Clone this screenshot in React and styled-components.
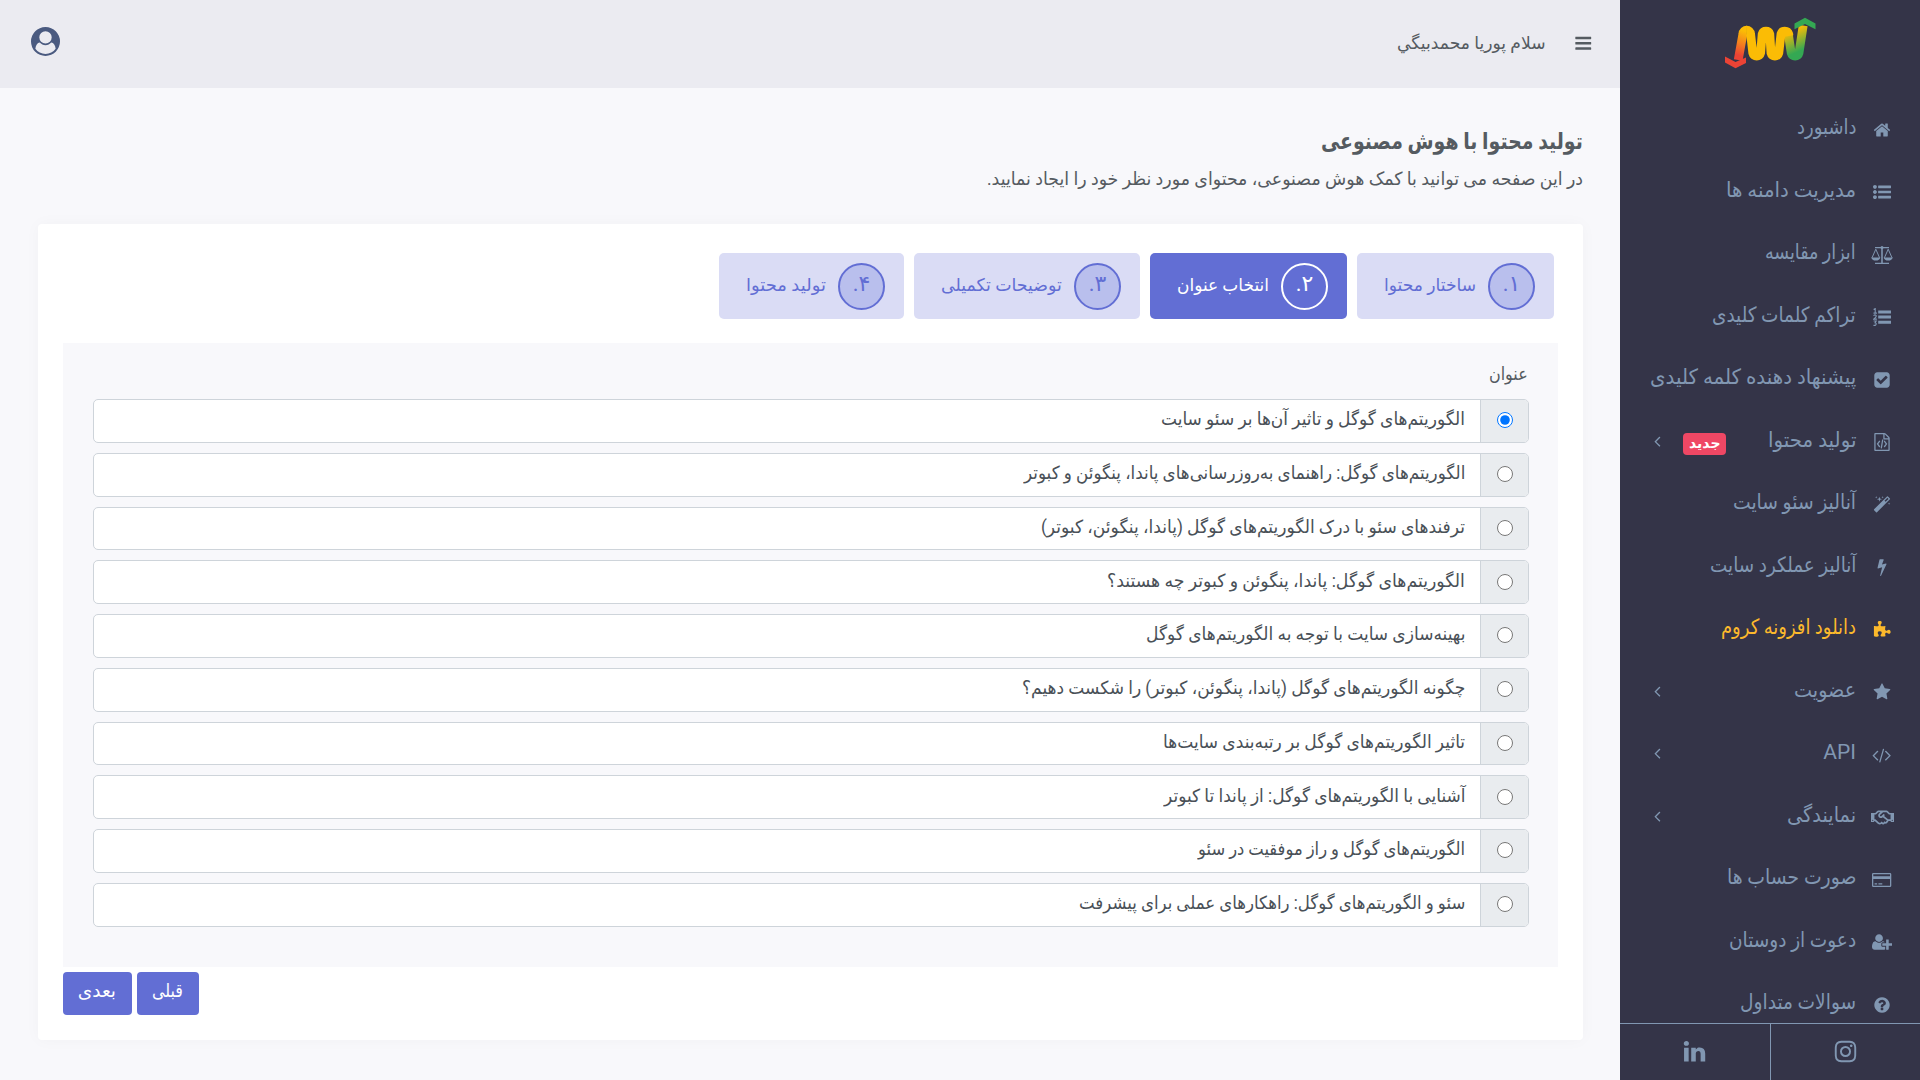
import React, { useLayoutEffect, useRef, useState } from "react";
import styled, { createGlobalStyle } from "styled-components";
import { FaRegHandshake } from "react-icons/fa";

const GlobalStyle = createGlobalStyle`
  * {
    box-sizing: border-box;
  }
  body {
    margin: 0;
    background: #f8f8fb;
    color: #555b61;
    font-family: Roboto, "DejaVu Sans", sans-serif;
    overflow: hidden;
  }
`;

const Page = styled.div`
  display: flex;
  direction: rtl;
  width: 1920px;
  height: 1080px;
`;

const Sidebar = styled.aside`
  display: flex;
  flex-direction: column;
  width: 300px;
  flex-shrink: 0;
  height: 1080px;
  background: #343448;
  color: #8197b2;
`;

const Brand = styled.div`
  height: 96px;
  flex-shrink: 0;
`;

const Menu = styled.ul`
  flex: 1;
  min-height: 0;
  margin: 0;
  padding: 0;
  list-style: none;
  overflow: hidden;
`;

const MenuItem = styled.li`
  display: flex;
  align-items: center;
  height: 62.5px;
  padding: 0 26px 0 28px;
  font-size: 21px;
  color: ${(props) => (props.$highlight ? "#fcb92c" : "inherit")};
`;

const MenuIcon = styled.span`
  display: flex;
  justify-content: center;
  width: 24px;
  flex-shrink: 0;
  margin-left: 14px;
  padding-top: 5px;

  svg {
    flex-shrink: 0;
  }
`;

const Badge = styled.span`
  display: flex;
  align-items: center;
  justify-content: center;
  width: 43px;
  height: 22px;
  margin-right: 41px;
  margin-top: 8px;
  padding-bottom: 2px;
  border-radius: 4px;
  background: #ef4764;
  color: #fff;
  font-size: 14px;
  font-weight: 700;
`;

const Arrow = styled.span`
  display: flex;
  margin-right: auto;
  margin-left: 6px;
  padding-top: 2px;
`;

const Social = styled.div`
  display: flex;
  height: 57px;
  flex-shrink: 0;
  border-top: 1px solid #8197b2;
`;

const SocialLink = styled.a`
  display: flex;
  flex: 1;
  align-items: center;
  justify-content: center;
  padding-bottom: 2px;
  color: #8197b2;

  & + & {
    border-right: 1px solid #8197b2;
  }
`;

const Main = styled.main`
  flex: 1;
  display: flex;
  flex-direction: column;
`;

const Topbar = styled.header`
  display: flex;
  align-items: center;
  height: 88px;
  padding: 0 28px 6px 31px;
  background: #ebebf1;
  font-size: 17.5px;
`;

const MenuToggle = styled.span`
  display: flex;
  padding-top: 4px;
`;

const Greeting = styled.div`
  margin: 4px 28px 0 auto;
`;

const Content = styled.div`
  padding: 36px 37px 0 38px;
`;

const PageTitle = styled.h1`
  margin: 0;
  height: 36px;
  line-height: 36px;
  font-size: 23px;
  font-weight: 700;
`;

const PageHint = styled.p`
  margin: 0;
  height: 64px;
  line-height: 38px;
  font-size: 18px;
`;

const Card = styled.section`
  height: 816px;
  padding: 29px 25px 0;
  border-radius: 4px;
  background: #fff;
  box-shadow: 0 0 16px rgba(18, 38, 63, 0.03);
`;

const Steps = styled.div`
  display: flex;
  gap: 10px;
  padding-right: 4px;
`;

const Step = styled.div`
  display: flex;
  align-items: center;
  height: 66px;
  padding: 0 19px 0 27px;
  border-radius: 5px;
  background: ${(props) => (props.$active ? "#626ed4" : "#dadcf5")};
  color: ${(props) => (props.$active ? "#fff" : "#626ed4")};
  font-size: 17.5px;
`;

const StepNumber = styled.span`
  display: flex;
  align-items: center;
  justify-content: center;
  width: 47px;
  height: 47px;
  margin-left: 12px;
  padding-bottom: 5px;
  border: 2px solid ${(props) => (props.$active ? "#fff" : "#626ed4")};
  border-radius: 50%;
  background: ${(props) => (props.$active ? "transparent" : "#b9bfed")};
  font-size: 22px;
`;

const StepLabel = styled.span`
  padding-bottom: 3px;
`;

const Panel = styled.div`
  height: 624px;
  margin-top: 24px;
  padding: 16px 29px 0 30px;
  background: #f8f8fb;
`;

const Label = styled.div`
  height: 40px;
  line-height: 30px;
  padding-right: 1px;
  font-size: 18px;
`;

const Options = styled.div`
  display: flex;
  flex-direction: column;
  gap: 10px;
`;

const Option = styled.label`
  display: flex;
  height: 43.75px;
  border: 1px solid #ced4da;
  border-radius: 5px;
  background: #fff;
  color: #495057;
  font-size: 18px;
  overflow: hidden;
`;

const OptionRadio = styled.span`
  display: flex;
  align-items: center;
  justify-content: center;
  width: 48px;
  padding-bottom: 1px;
  border-left: 1px solid #ced4da;
  background: #e9ecef;

  input {
    width: 16px;
    height: 16px;
    margin: 0;
  }
`;

const OptionText = styled.span`
  display: flex;
  align-items: center;
  flex: 1;
  padding: 0 15px 4px;
`;

const Actions = styled.div`
  display: flex;
  justify-content: flex-end;
  gap: 5px;
  margin-top: 5px;
`;

const Button = styled.button`
  display: flex;
  align-items: center;
  justify-content: center;
  height: 43px;
  padding: 0 16px 6px 15px;
  border: 0;
  border-radius: 4px;
  background: #626ed4;
  color: #fff;
  font: inherit;
  font-size: 18.5px;
`;

const PhraseBox = styled.span`
  display: inline-block;
  flex-shrink: 0;
  white-space: nowrap;
`;

const PhraseText = styled.span`
  display: inline-block;
  transform-origin: right center;
`;

// Condenses a run of text to the given column width.
const Phrase = ({ width, children }) => {
  const ref = useRef(null);
  const [scale, setScale] = useState(1);

  useLayoutEffect(() => {
    setScale(width / ref.current.offsetWidth);
  }, [width, children]);

  return (
    <PhraseBox style={{ width }}>
      <PhraseText ref={ref} style={{ transform: `scaleX(${scale})` }}>
        {children}
      </PhraseText>
    </PhraseBox>
  );
};

const Glyph = ({ d, w = 1792, size = 18, x = 0 }) => (
  <svg
    width={(size * w) / 1792}
    height={size}
    viewBox={`${x} 0 ${w} 1792`}
    fill="currentColor"
  >
    <path d={d} />
  </svg>
);

const paths = {
  home: "M1472 992v480q0 26-19 45t-45 19h-384v-384h-256v384h-384q-26 0-45-19t-19-45v-480q0-1 .5-3t.5-3l575-474 575 474q1 2 1 6zm223-69l-62 74q-8 9-21 11h-3q-13 0-21-7l-692-577-692 577q-12 8-24 7-13-2-21-11l-62-74q-8-10-7-23.5t11-21.5l719-599q32-26 76-26t76 26l244 204v-195q0-14 9-23t23-9h192q14 0 23 9t9 23v408l219 182q10 8 11 21.5t-7 23.5z",
  list: "M384 1408q0 80-56 136t-136 56-136-56-56-136 56-136 136-56 136 56 56 136zm0-512q0 80-56 136t-136 56-136-56-56-136 56-136 136-56 136 56 56 136zm1408 416v192q0 13-9.5 22.5t-22.5 9.5h-1216q-13 0-22.5-9.5t-9.5-22.5v-192q0-13 9.5-22.5t22.5-9.5h1216q13 0 22.5 9.5t9.5 22.5zm-1408-928q0 80-56 136t-136 56-136-56-56-136 56-136 136-56 136 56 56 136zm1408 416v192q0 13-9.5 22.5t-22.5 9.5h-1216q-13 0-22.5-9.5t-9.5-22.5v-192q0-13 9.5-22.5t22.5-9.5h1216q13 0 22.5 9.5t9.5 22.5zm0-512v192q0 13-9.5 22.5t-22.5 9.5h-1216q-13 0-22.5-9.5t-9.5-22.5v-192q0-13 9.5-22.5t22.5-9.5h1216q13 0 22.5 9.5t9.5 22.5z",
  check: "M813 1299l614-614q19-19 19-45t-19-45l-102-102q-19-19-45-19t-45 19l-467 467-211-211q-19-19-45-19t-45 19l-102 102q-19 19-19 45t19 45l358 358q19 19 45 19t45-19zm851-883v960q0 119-84.5 203.5t-203.5 84.5h-960q-119 0-203.5-84.5t-84.5-203.5v-960q0-119 84.5-203.5t203.5-84.5h960q119 0 203.5 84.5t84.5 203.5z",
  file: "M1596 380q28 28 48 76t20 88v1152q0 40-28 68t-68 28h-1344q-40 0-68-28t-28-68v-1600q0-40 28-68t68-28h896q40 0 88 20t76 48zm-444-244v376h376q-10-29-22-41l-313-313q-12-12-41-22zm384 1528v-1024h-416q-40 0-68-28t-28-68v-416h-768v1536h1280zm-928-896q8-11 21-12.5t24 6.5l51 38q11 8 12.5 21t-6.5 24l-182 243 182 243q8 11 6.5 24t-12.5 21l-51 38q-11 8-24 6.5t-21-12.5l-226-301q-14-19 0-38zm802 301q14 19 0 38l-226 301q-8 11-21 12.5t-24-6.5l-51-38q-11-8-12.5-21t6.5-24l182-243-182-243q-8-11-6.5-24t12.5-21l51-38q11-8 24-6.5t21 12.5zm-620 461q-13-2-20.5-13t-5.5-24l138-831q2-13 13-20.5t24-5.5l63 10q13 2 20.5 13t5.5 24l-138 831q-2 13-13 20.5t-24 5.5z",
  magic: "M1254 581l293-293-107-107-293 293zm447-293q0 27-18 45l-1286 1286q-18 18-45 18t-45-18l-198-198q-18-18-18-45t18-45l1286-1286q18-18 45-18t45 18l198 198q18 18 18 45zm-1351-190l98 30-98 30-30 98-30-98-98-30 98-30 30-98zm350 162l196 60-196 60-60 196-60-196-196-60 196-60 60-196zm930 478l98 30-98 30-30 98-30-98-98-30 98-30 30-98zm-640-640l98 30-98 30-30 98-30-98-98-30 98-30 30-98z",
  bolt: "M1333 566q18 20 7 44l-540 1157q-13 25-42 25-4 0-14-2-17-5-25.5-19t-4.5-30l197-808-406 101q-4 1-12 1-18 0-31-11-18-15-13-39l201-825q4-14 16-23t28-9h328q19 0 32 12.5t13 29.5q0 8-5 18l-171 463 396-98q8-2 12-2 19 0 34 15z",
  puzzle: "M1755 1083q0 81-44.5 135t-123.5 54q-41 0-77.5-17.5t-59-38-56.5-38-71-17.5q-110 0-110 124 0 39 16 115t15 115v5q-22 0-33 1-34 3-97.5 11.5t-115.5 13.5-98 5q-61 0-103-26.5t-42-83.5q0-37 17.5-71t38-56.5 38-59 17.5-77.5q0-79-54-123.5t-135-44.5q-84 0-143 45.5t-59 127.5q0 43 15 83t33.5 64.5 33.5 53 15 50.5q0 45-46 89-37 35-117 35-95 0-245-24-9-2-27.5-4t-27.5-4l-13-2q-1 0-3-1-2 0-2-1v-1024q2 1 17.5 3.5t34 5 21.5 3.5q150 24 245 24 80 0 117-35 46-44 46-89 0-22-15-50.5t-33.5-53-33.5-64.5-15-83q0-82 59-127.5t144-45.5q80 0 134 44.5t54 123.5q0 41-17.5 77.5t-38 59-38 56.5-17.5 71q0 57 42 83.5t103 26.5q64 0 180-15t163-17v2q-1 2-3.5 17.5t-5 34-3.5 21.5q-24 150-24 245 0 80 35 117 44 46 89 46 22 0 50.5-15t53-33.5 64.5-33.5 83-15q82 0 127.5 59t45.5 143z",
  star: "M1728 647q0 22-26 48l-363 354 86 500q1 7 1 20 0 21-10.5 35.5t-30.5 14.5q-19 0-40-12l-449-236-449 236q-22 12-40 12-21 0-31.5-14.5t-10.5-35.5q0-6 2-20l86-500-364-354q-25-27-25-48 0-37 56-46l502-73 225-455q19-41 49-41t49 41l225 455 502 73q56 9 56 46z",
  code: "M617 1399l-50 50q-10 10-23 10t-23-10l-466-466q-10-10-10-23t10-23l466-466q10-10 23-10t23 10l50 50q10 10 10 23t-10 23l-393 393 393 393q10 10 10 23t-10 23zm591-1067l-373 1291q-4 13-15.5 19.5t-23.5 2.5l-62-17q-13-4-19.5-15.5t-2.5-24.5l373-1291q4-13 15.5-19.5t23.5-2.5l62 17q13 4 19.5 15.5t2.5 24.5zm657 651l-466 466q-10 10-23 10t-23-10l-50-50q-10-10-10-23t10-23l393-393-393-393q-10-10-10-23t10-23l50-50q10-10 23-10t23 10l466 466q10 10 10 23t-10 23z",
  card: "M128 192h1664q128 0 128 128v1152q0 128-128 128h-1664q-128 0-128-128v-1152q0-128 128-128zm0 128v192h1664v-192zm0 480v672h1664v-672zm128 416h256v128h-256zm384 0h384v128h-384z",
  invite: "M704 896q-159 0-271.5-112.5t-112.5-271.5 112.5-271.5 271.5-112.5 271.5 112.5 112.5 271.5-112.5 271.5-271.5 112.5zm960 128h352q13 0 22.5 9.5t9.5 22.5v192q0 13-9.5 22.5t-22.5 9.5h-352v352q0 13-9.5 22.5t-22.5 9.5h-192q-13 0-22.5-9.5t-9.5-22.5v-352h-352q-13 0-22.5-9.5t-9.5-22.5v-192q0-13 9.5-22.5t22.5-9.5h352v-352q0-13 9.5-22.5t22.5-9.5h192q13 0 22.5 9.5t9.5 22.5v352zm-736 224q0 52 38 90t90 38h256v238q-68 50-171 50h-874q-121 0-194-69t-73-190q0-53 3.5-103.5t14-109 26.5-108.5 43-97.5 62-81 85.5-53.5 111.5-20q19 0 39 17 79 61 154.5 91.5t164.5 30.5 164.5-30.5 154.5-91.5q20-17 39-17 132 0 217 96h-223q-52 0-90 38t-38 90v192z",
  question: "M1024 1376v-192q0-14-9-23t-23-9h-192q-14 0-23 9t-9 23v192q0 14 9 23t23 9h192q14 0 23-9t9-23zm256-672q0-88-55.5-163t-138.5-116-170-41q-243 0-371 213-15 24 8 42l132 100q7 6 19 6 16 0 25-12 53-68 86-92 34-24 86-24 48 0 85.5 26t37.5 59q0 38-20 61t-68 45q-63 28-115.5 86.5t-52.5 125.5v36q0 14 9 23t23 9h192q14 0 23-9t9-23q0-19 21.5-49.5t54.5-49.5q32-18 49-28.5t46-35 44.5-48 28-60.5 12.5-81zm384 192q0 209-103 385.5t-279.5 279.5-385.5 103-385.5-103-279.5-279.5-103-385.5 103-385.5 279.5-279.5 385.5-103 385.5 103 279.5 279.5 103 385.5z",
  instagram: "M1152 896q0-106-75-181t-181-75-181 75-75 181 75 181 181 75 181-75 75-181zm138 0q0 164-115 279t-279 115-279-115-115-279 115-279 279-115 279 115 115 279zm108-410q0 38-27 65t-65 27-65-27-27-65 27-65 65-27 65 27 27 65zm-502-220q-7 0-76.5-.5t-105.5 0-96.5 3-103 10-71.5 18.5q-50 20-88 58t-58 88q-11 29-18.5 71.5t-10 103-3 96.5 0 105.5.5 76.5-.5 76.5 0 105.5 3 96.5 10 103 18.5 71.5q20 50 58 88t88 58q29 11 71.5 18.5t103 10 96.5 3 105.5 0 76.5-.5 76.5.5 105.5 0 96.5-3 103-10 71.5-18.5q50-20 88-58t58-88q11-29 18.5-71.5t10-103 3-96.5 0-105.5-.5-76.5.5-76.5 0-105.5-3-96.5-10-103-18.5-71.5q-20-50-58-88t-88-58q-29-11-71.5-18.5t-103-10-96.5-3-105.5 0-76.5.5zm768 630q0 229-5 317-10 208-124 322t-322 124q-88 5-317 5t-317-5q-208-10-322-124t-124-322q-5-88-5-317t5-317q10-208 124-322t322-124q88-5 317-5t317 5q208 10 322 124t124 322q5 88 5 317z",
  linkedin: "M477 625v991h-330v-991h330zm21-306q1 73-50.5 122t-135.5 49h-2q-82 0-132-49t-50-122q0-74 51.5-122.5t134.5-48.5 133 48.5 51 122.5zm1166 729v568h-329v-530q0-105-40.5-164.5t-126.5-59.5q-63 0-105.5 34.5t-63.5 85.5q-11 30-11 81v553h-329q2-399 2-647t-1-296l-1-48h329v144h-2q20-32 41-56t56.5-52 87-43.5 114.5-15.5q171 0 275 113.5t104 332.5z",
  angle: "M1203 544q0 13-10 23l-393 393 393 393q10 10 10 23t-10 23l-50 50q-10 10-23 10t-23-10l-466-466q-10-10-10-23t10-23l466-466q10-10 23-10t23 10l50 50q10 10 10 23z",
  bars: "M1664 1344v128q0 26-19 45t-45 19h-1408q-26 0-45-19t-19-45v-128q0-26 19-45t45-19h1408q26 0 45 19t19 45zm0-512v128q0 26-19 45t-45 19h-1408q-26 0-45-19t-19-45v-128q0-26 19-45t45-19h1408q26 0 45 19t19 45zm0-512v128q0 26-19 45t-45 19h-1408q-26 0-45-19t-19-45v-128q0-26 19-45t45-19h1408q26 0 45 19t19 45z",
  user: "M1523 1339q-22-155-87.5-257.5t-184.5-118.5q-67 74-159.5 115.5t-195.5 41.5-195.5-41.5-159.5-115.5q-119 16-184.5 118.5t-87.5 257.5q106 150 271 237.5t356 87.5 356-87.5 271-237.5zm-243-699q0-159-112.5-271.5t-271.5-112.5-271.5 112.5-112.5 271.5 112.5 271.5 271.5 112.5 271.5-112.5 112.5-271.5zm512 256q0 182-71 347.5t-190.5 286-285.5 191.5-349 71q-182 0-348-71t-286-191-191-286-71-348 71-348 191-286 286-191 348-71 348 71 286 191 191 286 71 348z",
};

const CardIcon = () => (
  <svg width="19.3" height="18" viewBox="0 0 1920 1792" fill="currentColor">
    <path fillRule="evenodd" d={paths.card} />
  </svg>
);

const ScaleIcon = () => (
  <svg width="22" height="18" viewBox="0 0 22 18" fill="none" stroke="currentColor">
    <path d="M4 1.7H18M4 17.3H18" strokeWidth="1.3" />
    <path d="M11 1V17" strokeWidth="1.6" />
    <path d="M1 11.8L4.8 3.2L8.6 11.8M13.4 11.8L17.2 3.2L21 11.8" strokeWidth="1" />
    <path
      d="M.2 11.5H9.4Q8.6 14.6 4.8 14.6T.2 11.5ZM12.6 11.5H21.8Q21 14.6 17.2 14.6T12.6 11.5Z"
      fill="currentColor"
      stroke="none"
    />
    <circle cx="11" cy="1.6" r="1.5" fill="currentColor" stroke="none" />
  </svg>
);

const NumberedIcon = () => (
  <svg width="18" height="18" viewBox="0 0 18 18" fill="currentColor">
    <path d="M5.2 2.5H18V5.5H5.2ZM5.2 7.6H18V10.6H5.2ZM5.2 12.7H18V15.7H5.2Z" />
    <path
      d="M.6 1.5L2.2.6V4.9M.5 5.1H3.9M.5 7.6Q2 6.3 3 7.4T.7 11.1H3.9M.6 13H3.2L2 14.7Q3.5 14.9 3.1 16.4T.4 17.2"
      fill="none"
      stroke="currentColor"
      strokeWidth="1.1"
    />
  </svg>
);

const Logo = () => (
  <svg width="300" height="96" viewBox="0 0 300 96">
    <defs>
      <linearGradient id="warm" gradientUnits="userSpaceOnUse" x1="118" y1="58" x2="127" y2="32">
        <stop offset="0.1" stopColor="#ea4335" />
        <stop offset="0.5" stopColor="#f47b20" />
        <stop offset="1" stopColor="#fbbc05" />
      </linearGradient>
      <linearGradient id="fresh" gradientUnits="userSpaceOnUse" x1="166" y1="33" x2="175" y2="53">
        <stop offset="0" stopColor="#fbbc05" />
        <stop offset="1" stopColor="#34a853" />
      </linearGradient>
    </defs>
    <g fill="none" strokeWidth="8.8">
      <path d="M168.3 34L171.2 53A4 4 0 0 0 179 53L183.2 25.5" stroke="url(#fresh)" />
      <path d="M118.2 60L122.9 34A4 4 0 0 1 126.9 30.2" stroke="url(#warm)" />
      <path
        d="M126.4 30.2A4 4 0 0 1 130.6 34L132.8 53A4 4 0 0 0 140.6 53L142.2 34A4 4 0 0 1 149.8 34L151 53A4 4 0 0 0 158.8 53L161 34A4 4 0 0 1 168.7 34L169 36"
        stroke="#fbbc05"
      />
    </g>
    <path d="M174.5 23.5L185 17.8L195.5 23.500V29.3L185 24L174.5 29.3Z" fill="#34a853" />
    <path d="M105 56.5L115.5 62L126 57.500V63L115.5 68.3L105 62.5Z" fill="#ea4335" />
  </svg>
);

const menu = [
  { text: "داشبورد", width: 59, icon: <Glyph d={paths.home} /> },
  { text: "مدیریت دامنه ها", width: 130, icon: <Glyph d={paths.list} /> },
  { text: "ابزار مقایسه", width: 91, icon: <ScaleIcon /> },
  { text: "تراکم کلمات کلیدی", width: 144, icon: <NumberedIcon /> },
  { text: "پیشنهاد دهنده کلمه کلیدی", width: 206, icon: <Glyph d={paths.check} /> },
  { text: "تولید محتوا", width: 89, icon: <Glyph d={paths.file} />, badge: "جدید", open: true },
  { text: "آنالیز سئو سایت", width: 123, icon: <Glyph d={paths.magic} /> },
  { text: "آنالیز عملکرد سایت", width: 146, icon: <Glyph d={paths.bolt} /> },
  { text: "دانلود افزونه کروم", width: 135, icon: <Glyph d={paths.puzzle} />, highlight: true },
  { text: "عضویت", width: 62, icon: <Glyph d={paths.star} />, open: true },
  { text: "API", width: 33, icon: <Glyph d={paths.code} w={1920} />, open: true },
  { text: "نمایندگی", width: 69, icon: <FaRegHandshake size={23} />, open: true },
  { text: "صورت حساب ها", width: 129, icon: <CardIcon /> },
  { text: "دعوت از دوستان", width: 127, icon: <Glyph d={paths.invite} w={2048} /> },
  { text: "سوالات متداول", width: 116, icon: <Glyph d={paths.question} /> },
];

const steps = [
  { number: "۱.", text: "ساختار محتوا", width: 92 },
  { number: "۲.", text: "انتخاب عنوان", width: 92, active: true },
  { number: "۳.", text: "توضیحات تکمیلی", width: 121 },
  { number: "۴.", text: "تولید محتوا", width: 80 },
];

const titles = [
  { text: "الگوریتم‌های گوگل و تاثیر آن‌ها بر سئو سایت", width: 304 },
  { text: "الگوریتم‌های گوگل: راهنمای به‌روزرسانی‌های پاندا، پنگوئن و کبوتر", width: 441 },
  { text: "ترفندهای سئو با درک الگوریتم‌های گوگل (پاندا، پنگوئن، کبوتر)", width: 424 },
  { text: "الگوریتم‌های گوگل: پاندا، پنگوئن و کبوتر چه هستند؟", width: 358 },
  { text: "بهینه‌سازی سایت با توجه به الگوریتم‌های گوگل", width: 319 },
  { text: "چگونه الگوریتم‌های گوگل (پاندا، پنگوئن، کبوتر) را شکست دهیم؟", width: 443 },
  { text: "تاثیر الگوریتم‌های گوگل بر رتبه‌بندی سایت‌ها", width: 302 },
  { text: "آشنایی با الگوریتم‌های گوگل: از پاندا تا کبوتر", width: 301 },
  { text: "الگوریتم‌های گوگل و راز موفقیت در سئو", width: 267 },
  { text: "سئو و الگوریتم‌های گوگل: راهکارهای عملی برای پیشرفت", width: 386 },
];

const App = () => {
  const [selected, setSelected] = useState(0);

  return (
    <>
      <GlobalStyle />
      <Page>
        <Sidebar>
          <Brand>
            <Logo />
          </Brand>
          <Menu>
            {menu.map((item) => (
              <MenuItem key={item.text} $highlight={item.highlight}>
                <MenuIcon>{item.icon}</MenuIcon>
                <Phrase width={item.width}>{item.text}</Phrase>
                {item.badge && (
                  <Badge>
                    <Phrase width={32}>{item.badge}</Phrase>
                  </Badge>
                )}
                {item.open && (
                  <Arrow>
                    <Glyph d={paths.angle} x={576} w={680} />
                  </Arrow>
                )}
              </MenuItem>
            ))}
          </Menu>
          <Social>
            <SocialLink>
              <Glyph d={paths.instagram} size={25} />
            </SocialLink>
            <SocialLink>
              <Glyph d={paths.linkedin} size={25} />
            </SocialLink>
          </Social>
        </Sidebar>
        <Main>
          <Topbar>
            <MenuToggle>
              <Glyph d={paths.bars} size={18.5} />
            </MenuToggle>
            <Greeting>
              <Phrase width={149}>سلام پوریا محمدبیگي</Phrase>
            </Greeting>
            <svg width="29" height="29" viewBox="0 0 1792 1792" fill="#4a5a80">
              <path d={paths.user} />
            </svg>
          </Topbar>
          <Content>
            <PageTitle>
              <Phrase width={262}>تولید محتوا با هوش مصنوعی</Phrase>
            </PageTitle>
            <PageHint>
              <Phrase width={596}>
                در این صفحه می توانید با کمک هوش مصنوعی، محتوای مورد نظر خود را ایجاد نمایید.
              </Phrase>
            </PageHint>
            <Card>
              <Steps>
                {steps.map((step) => (
                  <Step key={step.number} $active={step.active}>
                    <StepNumber $active={step.active}>{step.number}</StepNumber>
                    <StepLabel>
                      <Phrase width={step.width}>{step.text}</Phrase>
                    </StepLabel>
                  </Step>
                ))}
              </Steps>
              <Panel>
                <Label>
                  <Phrase width={39}>عنوان</Phrase>
                </Label>
                <Options>
                  {titles.map((title, index) => (
                    <Option key={title.text}>
                      <OptionRadio>
                        <input
                          type="radio"
                          name="title"
                          checked={selected === index}
                          onChange={() => setSelected(index)}
                        />
                      </OptionRadio>
                      <OptionText>
                        <Phrase width={title.width}>{title.text}</Phrase>
                      </OptionText>
                    </Option>
                  ))}
                </Options>
              </Panel>
              <Actions>
                <Button>
                  <Phrase width={31}>قبلی</Phrase>
                </Button>
                <Button>
                  <Phrase width={38}>بعدی</Phrase>
                </Button>
              </Actions>
            </Card>
          </Content>
        </Main>
      </Page>
    </>
  );
};

export default App;
